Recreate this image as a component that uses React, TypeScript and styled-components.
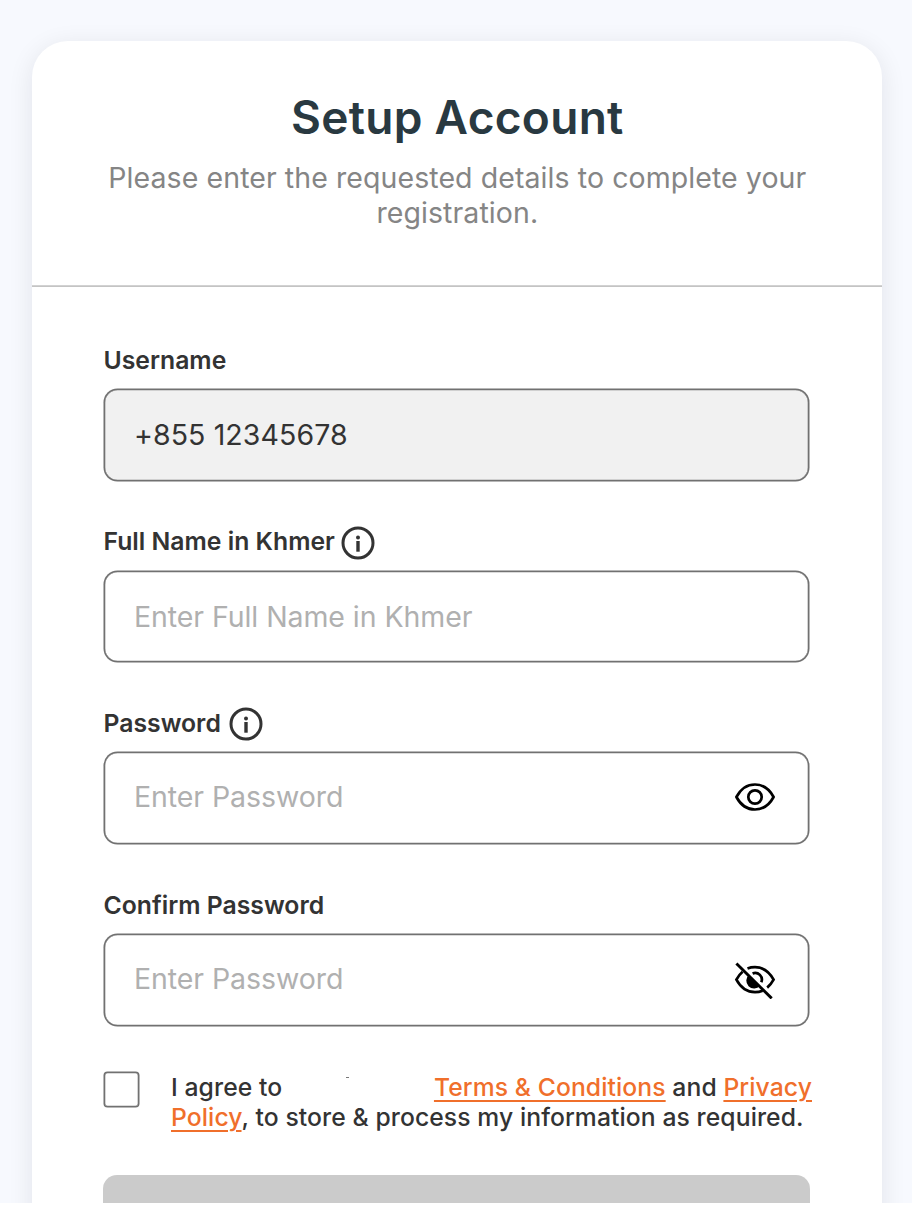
import React from "react";
import styled, { createGlobalStyle } from "styled-components";

const GlobalStyle = createGlobalStyle`
  *, *::before, *::after { box-sizing: border-box; }
  html { background: #fff; }
  body { margin: 0; font-family: Inter, "Liberation Sans", sans-serif; color: #333; }
`;

const Page = styled.main`
  height: 1203px;
  overflow: hidden;
  padding: 41.3px 30.4px 0 32px;
  background: #f7f9fe;
`;

const Card = styled.section`
  height: 1300px;
  border-radius: 36px;
  background: #fff;
  box-shadow: 0 5px 26px rgba(10, 15, 30, 0.09);
`;

const Header = styled.header`
  display: flex;
  flex-direction: column;
  align-items: center;
  height: 246px;
  padding: 46px 69px 0 70px;
  text-align: center;
  box-shadow: inset 0 -1.8px 0 #c4c4c4;
`;

const Title = styled.h1`
  margin: 0;
  font-size: 46px;
  line-height: 60px;
  font-weight: 600;
  letter-spacing: 0.3px;
  color: #293941;
`;

const Subtitle = styled.p`
  margin: 12.5px 0 0;
  font-size: 28.5px;
  line-height: 35.5px;
  letter-spacing: 0.08px;
  color: #858585;
`;

const Form = styled.form`
  display: flex;
  flex-direction: column;
  padding: 57px 73.6px 0 73px;
`;

const Field = styled.div`
  display: flex;
  flex-direction: column;
  height: 181.6px;
`;

const Label = styled.label<{ $gap: number }>`
  display: flex;
  align-items: center;
  gap: ${(p) => p.$gap}px;
  height: 34px;
  margin: 0 0 11.7px -1.5px;
  font-size: 24.75px;
  line-height: 30px;
  font-weight: 600;
  white-space: nowrap;
`;

const LabelText = styled.span`
  padding-bottom: 3px;
`;

const InputBox = styled.div<{ $filled?: boolean; $lift?: number; $drop?: number }>`
  display: flex;
  align-items: center;
  height: 89.8px;
  padding: ${(p) => p.$drop ?? 0}px 32px ${(p) => p.$lift ?? 0}px 29px;
  border-radius: 12.5px;
  background: ${(p) => (p.$filled ? "#f1f1f1" : "#fff")};
  box-shadow: 0 0 0 1.5px #717171, inset 0 0 0 0.3px #717171;
`;

const Input = styled.input`
  flex: 1;
  min-width: 0;
  padding: 0;
  border: 0;
  outline: 0;
  background: transparent;
  font: 400 28.5px/36px Inter, "Liberation Sans", sans-serif;
  letter-spacing: 0.1px;
  color: #333;
  &::placeholder { color: #b0b0b0; opacity: 1; letter-spacing: -0.07px; }
`;

const Consent = styled.div`
  display: flex;
  align-items: flex-start;
  gap: 33px;
  height: 104.2px;
  padding-top: 1.2px;
`;

const Checkbox = styled.span`
  flex: none;
  width: 33px;
  height: 33px;
  margin-top: 1.5px;
  border-radius: 2.5px;
  box-shadow: 0 0 0 1.5px #717171, inset 0 0 0 0.3px #717171;
`;

const ConsentText = styled.p`
  margin: 0 -10px 0 0;
  font-size: 24.7px;
  line-height: 30.5px;
  font-weight: 500;
  letter-spacing: 0.09px;
  white-space: nowrap;
`;

const Blank = styled.span`
  display: inline-block;
  width: 145px;
  height: 20px;
  vertical-align: baseline;
`;

const Speck = styled.i`
  display: block;
  width: 3px;
  height: 1.5px;
  margin: 1px 0 0 57px;
  background: #777;
`;

const Link = styled.a`
  color: #f06f2b;
  text-decoration: underline;
  text-decoration-thickness: 2px;
  text-underline-offset: 3.5px;
`;

const Submit = styled.button`
  height: 92px;
  margin: 0 -2px;
  border: 0;
  border-radius: 14px;
  background: #cbcbcb;
`;

const Icon = styled.svg`
  flex: none;
  display: block;
`;

const InfoIcon = () => (
  <Icon width="34" height="34" viewBox="-17 -17 34 34" fill="none">
    <circle r="15" stroke="#333" strokeWidth="3" />
    <circle cy="-5.6" r="2" fill="#333" />
    <path d="M0-2V8.7" stroke="#333" strokeWidth="3.4" />
  </Icon>
);

const EyeIcon = () => (
  <Icon width="42" height="40" viewBox="-21 -20 42 40" fill="none" stroke="#000" strokeWidth="2.7">
    <path d="M-18.6 0C-14.5-7.6-7.8-12.5 0-12.5S14.5-7.6 18.6 0C14.5 7.6 7.8 12.5 0 12.5S-14.5 7.6-18.6 0Z" strokeLinejoin="round" />
    <circle r="6.7" />
  </Icon>
);

const EyeOffIcon = () => (
  <Icon width="42" height="40" viewBox="-21 -20.7 42 40" fill="none" stroke="#000" strokeWidth="2.7">
    <path d="M-7.5-11.2C-5.2-12.1-2.7-12.5 0-12.5C7.8-12.5 14.5-7.6 18.6 0C16.9 3.1 14.8 5.8 12.2 7.9" />
    <path d="M-12.4-7.9C-14.9-5.8-17-3.1-18.6 0C-14.5 7.6-7.8 12.5 0 12.5C2.8 12.5 5.2 12 7.6 11" />
    <path d="M-2.4-6.3A6.7 6.7 0 0 1 6.3 2.5" />
    <path d="M-6-5A7.8 7.8 0 1 0 5 6Z" fill="#000" stroke="none" />
    <path d="M-18.6-16.2L16.7 18.7" strokeWidth="2.9" />
  </Icon>
);

type FieldProps = {
  label: string;
  info?: boolean;
  value?: string;
  placeholder?: string;
  icon?: React.ReactNode;
  gap?: number;
  lift?: number;
  drop?: number;
};

const FormField = ({ label, info, value, placeholder, icon, gap = 7, lift, drop }: FieldProps) => (
  <Field>
    <Label $gap={gap}>
      <LabelText>{label}</LabelText>
      {info && <InfoIcon />}
    </Label>
    <InputBox $filled={!!value} $lift={lift} $drop={drop}>
      <Input defaultValue={value} placeholder={placeholder} readOnly={!!value} />
      {icon}
    </InputBox>
  </Field>
);

export default function App() {
  return (
    <>
      <GlobalStyle />
      <Page>
        <Card>
          <Header>
            <Title>Setup Account</Title>
            <Subtitle>Please enter the requested details to complete your registration.</Subtitle>
          </Header>
          <Form>
            <FormField label="Username" value="+855 12345678" drop={1} />
            <FormField label="Full Name in Khmer" info gap={6.3} placeholder="Enter Full Name in Khmer" drop={2} />
            <FormField label="Password" info gap={8} placeholder="Enter Password" icon={<EyeIcon />} lift={3} />
            <FormField label="Confirm Password" placeholder="Enter Password" icon={<EyeOffIcon />} lift={2} />
            <Consent>
              <Checkbox role="checkbox" aria-checked="false" />
              <ConsentText>
                I agree to <Blank><Speck /></Blank>
                <Link>Terms &amp; Conditions</Link> and <Link>Privacy<br />Policy</Link>, to store &amp; process my
                information as required.
              </ConsentText>
            </Consent>
            <Submit type="button" aria-label="Submit" />
          </Form>
        </Card>
      </Page>
    </>
  );
}
